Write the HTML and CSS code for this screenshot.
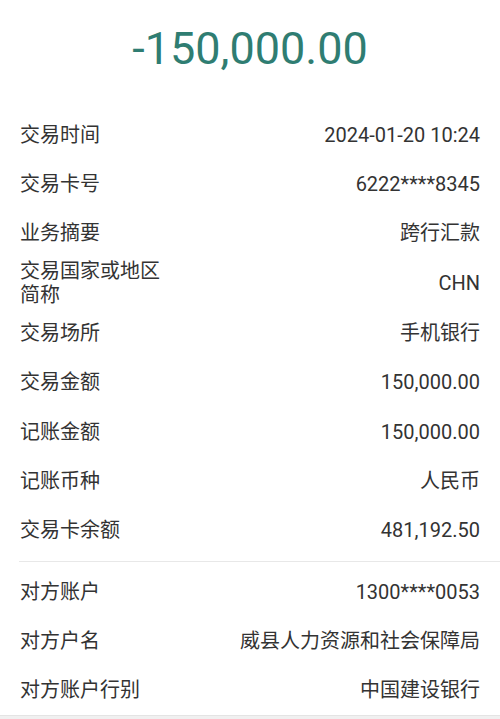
FILE: index.html
```html
<!DOCTYPE html>
<html>

<head>
    <title>交易明细</title>
    <link rel="stylesheet" href="styles.css">
</head>

<body>
    <!-- 金额 -->
    <div class="amount">-150,000.00</div>

    <!-- 交易信息 -->
    <div class="group">
        <div class="row"><span class="label">交易时间</span><span class="value">2024-01-20 10:24</span></div>
        <div class="row"><span class="label">交易卡号</span><span class="value">6222****8345</span></div>
        <div class="row"><span class="label">业务摘要</span><span class="value">跨行汇款</span></div>
        <div class="row tall"><span class="label narrow">交易国家或地区简称</span><span class="value">CHN</span></div>
        <div class="row"><span class="label">交易场所</span><span class="value">手机银行</span></div>
        <div class="row"><span class="label">交易金额</span><span class="value">150,000.00</span></div>
        <div class="row"><span class="label">记账金额</span><span class="value">150,000.00</span></div>
        <div class="row"><span class="label">记账币种</span><span class="value">人民币</span></div>
        <div class="row"><span class="label">交易卡余额</span><span class="value">481,192.50</span></div>
    </div>

    <!-- 对方信息 -->
    <div class="group other">
        <div class="row"><span class="label">对方账户</span><span class="value">1300****0053</span></div>
        <div class="row"><span class="label">对方户名</span><span class="value">威县人力资源和社会保障局</span></div>
        <div class="row"><span class="label">对方账户行别</span><span class="value">中国建设银行</span></div>
    </div>

    <div class="bottom-gap"></div>
</body>

</html>
```

FILE: styles.css
```css
body {
    margin: 0;
    background-color: #ffffff;
    font-family: Roboto, "Noto Sans CJK SC", sans-serif;
    color: #333333;
}

/* 顶部金额 */
.amount {
    text-align: center;
    font-size: 45px;
    line-height: 60px;
    padding-top: 19px;
    color: #2f7d72;
    height: 91px;
}

/* 列表 */
.group {
    padding: 0 20px 0 20px;
}

.row {
    display: flex;
    justify-content: space-between;
    align-items: center;
    height: 49.2px;
    font-size: 20px;
    line-height: 24px;
}

.row.tall {
    height: 51px;
}

.label {
    flex-shrink: 0;
}

.label.narrow {
    width: 150px;
}

.value {
    text-align: right;
}

/* 分隔线 */
.other {
    margin-top: 6px;
    margin-left: 19px;
    padding-left: 1px;
    padding-top: 6px;
    border-top: 1px solid #e8e8e8;
}

.bottom-gap {
    height: 10px;
    background-color: #f0f0f0;
    border-top: 1px solid #e4e4e4;
}
```
